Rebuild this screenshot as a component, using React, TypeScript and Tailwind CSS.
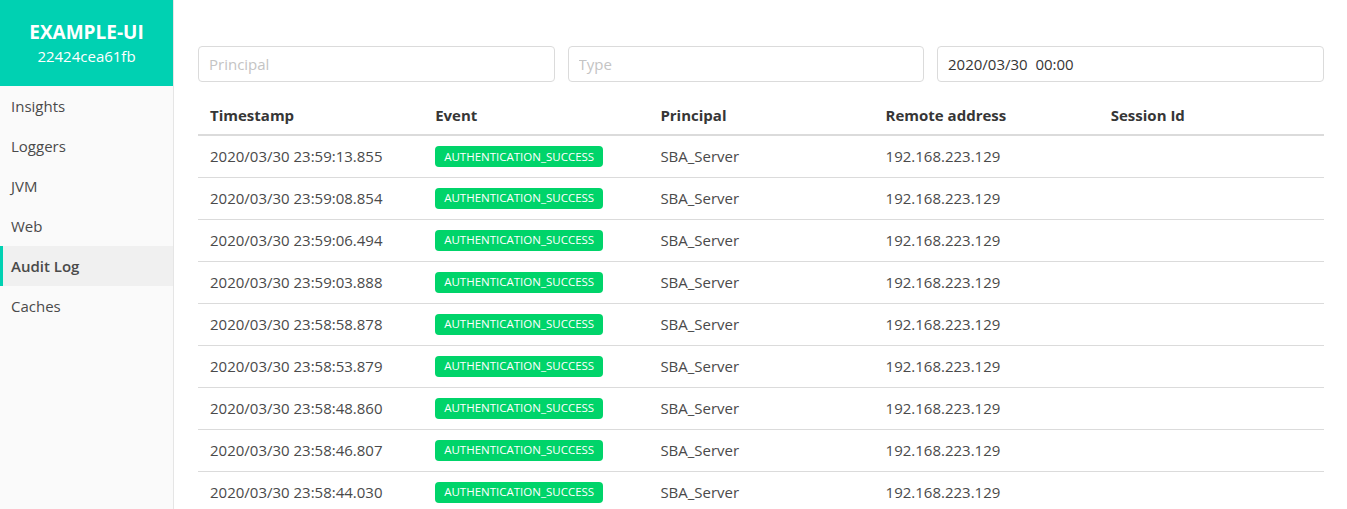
import React from 'react'

const rows = [
  '2020/03/30 23:59:13.855',
  '2020/03/30 23:59:08.854',
  '2020/03/30 23:59:06.494',
  '2020/03/30 23:59:03.888',
  '2020/03/30 23:58:58.878',
  '2020/03/30 23:58:53.879',
  '2020/03/30 23:58:48.860',
  '2020/03/30 23:58:46.807',
  '2020/03/30 23:58:44.030',
]

const navItems = ['Insights', 'Loggers', 'JVM', 'Web', 'Audit Log', 'Caches']

export default function App() {
  return (
    <div
      className="flex h-[509px] w-[1347px] overflow-hidden bg-white text-[#4a4a4a]"
      style={{ fontFamily: '"Open Sans", "Noto Sans", sans-serif' }}
    >
      {/* Sidebar */}
      <aside className="w-[174px] shrink-0 border-r border-[#e5e5e5] bg-[#fafafa]">
        <div className="flex h-[86px] flex-col items-center justify-center bg-[#00d1b2] text-white">
          <div className="text-[19px] font-bold leading-[26px]">EXAMPLE-UI</div>
          <div className="text-[15px] leading-[22px]">22424cea61fb</div>
        </div>
        <nav>
          {navItems.map((item) => (
            <div
              key={item}
              className={
                item === 'Audit Log'
                  ? 'flex h-10 items-center border-l-[3px] border-[#00d1b2] bg-[#f0f0f0] pl-[8px] text-[15px] font-semibold text-[#4a4a4a]'
                  : 'flex h-10 items-center pl-[11px] text-[15px] text-[#4a4a4a]'
              }
            >
              {item}
            </div>
          ))}
        </nav>
      </aside>

      {/* Main */}
      <main className="flex-1 pl-[24px] pr-[23px] pt-[46px]">
        <div className="flex gap-[13px]">
          <input
            className="h-[36px] flex-1 rounded-[4px] border border-[#dbdbdb] px-[10px] text-[15px] text-[#363636] outline-none placeholder:text-[#c4c4c4]"
            placeholder="Principal"
          />
          <input
            className="h-[36px] flex-1 rounded-[4px] border border-[#dbdbdb] px-[10px] text-[15px] text-[#363636] outline-none placeholder:text-[#c4c4c4]"
            placeholder="Type"
          />
          <input
            className="h-[36px] w-[387px] rounded-[4px] border border-[#dbdbdb] px-[10px] text-[15px] text-[#363636] outline-none"
            defaultValue="2020/03/30  00:00"
          />
        </div>

        <table className="mt-[7px] w-full table-fixed border-collapse text-[15px]">
          <thead>
            <tr className="border-b-2 border-[#dbdbdb] text-left align-bottom text-[#363636]">
              <th className="h-[46px] px-[12px] pb-[8px] font-bold">Timestamp</th>
              <th className="px-[12px] pb-[8px] font-bold">Event</th>
              <th className="px-[12px] pb-[8px] font-bold">Principal</th>
              <th className="px-[12px] pb-[8px] font-bold">Remote address</th>
              <th className="px-[12px] pb-[8px] font-bold">Session Id</th>
            </tr>
          </thead>
          <tbody>
            {rows.map((ts) => (
              <tr key={ts} className="border-b border-[#dbdbdb]">
                <td className="h-[42px] px-[12px]">{ts}</td>
                <td className="px-[12px]">
                  <span className="relative -top-px inline-flex h-[21px] items-center rounded-[4px] bg-[#00d46a] px-[9px] text-[11.5px] text-white">
                    AUTHENTICATION_SUCCESS
                  </span>
                </td>
                <td className="px-[12px]">SBA_Server</td>
                <td className="px-[12px]">192.168.223.129</td>
                <td className="px-[12px]"></td>
              </tr>
            ))}
          </tbody>
        </table>
      </main>
    </div>
  )
}
